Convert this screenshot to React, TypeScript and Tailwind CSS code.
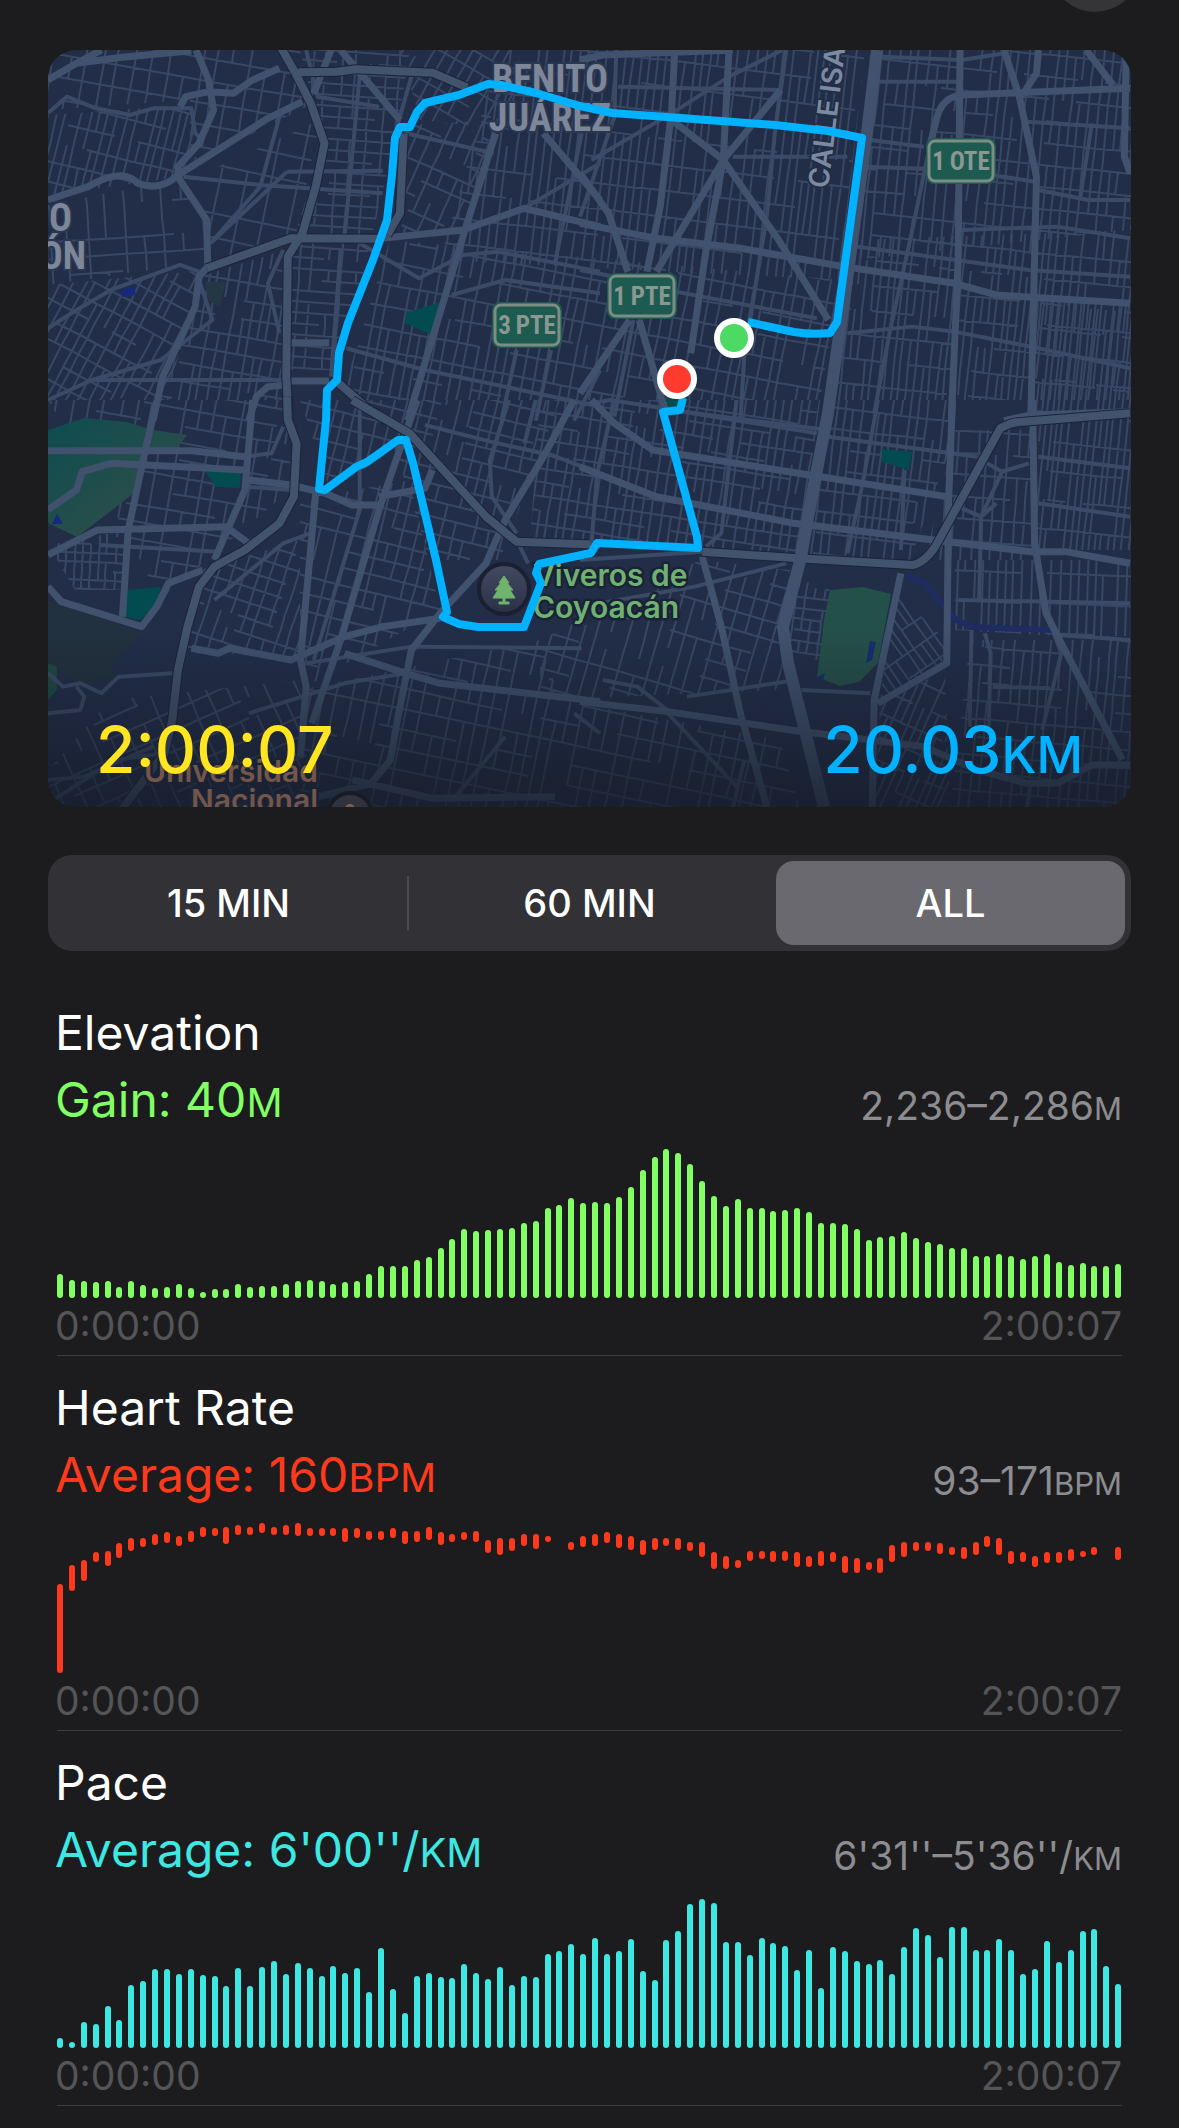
import { useState } from "react";

/* ---------- chart data ---------- */

const elevation = [
  24, 18, 17, 16, 17, 11, 17, 13, 10, 11, 14, 10, 6, 9, 9, 14, 11, 12, 12, 14, 17, 18, 17, 14, 16, 17, 24, 32, 32, 32,
  38, 41, 50, 59, 69, 67, 68, 69, 70, 75, 77, 90, 93, 100, 95, 96, 95, 101, 111, 128, 141, 149, 145, 134, 117, 102, 92,
  99, 90, 90, 87, 88, 90, 86, 75, 75, 74, 69, 58, 61, 62, 66, 60, 56, 54, 50, 50, 42, 42, 44, 42, 39, 42, 44, 36, 33,
  35, 32, 32, 34,
];

const pace = [
  10, 6, 26, 24, 42, 28, 63, 67, 79, 79, 74, 79, 73, 72, 62, 80, 62, 81, 87, 74, 85, 80, 72, 82, 75, 80, 56, 100, 59,
  35, 72, 75, 71, 70, 84, 75, 69, 81, 63, 72, 71, 94, 97, 104, 94, 110, 94, 97, 109, 77, 68, 108, 117, 144, 149, 145,
  106, 106, 93, 110, 105, 102, 78, 98, 60, 101, 97, 87, 84, 88, 74, 101, 120, 113, 91, 121, 121, 98, 98, 109, 98, 74,
  79, 107, 86, 98, 117, 119, 82, 64,
];

/* [offset from the top, length]; a zero length is a missing sample */
const heartRate: [number, number][] = [
  [61, 89], [42, 26], [37, 21], [29, 10], [28, 15], [20, 15], [15, 13], [15, 9], [11, 11], [9, 11],
  [13, 10], [8, 11], [4, 10], [5, 8], [4, 17], [2, 10], [4, 8], [0, 10], [4, 8], [2, 10],
  [0, 13], [5, 8], [5, 8], [5, 8], [5, 14], [5, 10], [8, 9], [8, 9], [5, 10], [8, 13],
  [8, 11], [4, 13], [9, 13], [11, 8], [9, 8], [8, 11], [17, 13], [15, 17], [15, 13], [11, 12],
  [11, 15], [13, 6], [0, 0], [19, 8], [13, 11], [11, 12], [9, 11], [11, 14], [13, 14], [17, 15],
  [15, 12], [15, 8], [15, 12], [19, 9], [19, 15], [29, 17], [33, 13], [37, 8], [28, 10], [28, 8],
  [28, 11], [28, 10], [29, 15], [33, 11], [28, 15], [29, 10], [33, 17], [35, 15], [39, 8], [35, 15],
  [22, 17], [19, 15], [19, 9], [19, 9], [20, 11], [24, 8], [24, 12], [19, 13], [13, 11], [15, 17],
  [28, 13], [29, 10], [33, 11], [29, 11], [29, 11], [26, 12], [28, 6], [24, 8], [0, 0], [24, 13],
];

const CHART_HEIGHT = 150;
const fromBase = (values: number[]): [number, number][] => values.map((v) => [CHART_HEIGHT - v, v]);

/* ---------- map streets ---------- */

type District = { poly: [number, number][]; angle: number; gap: number; block: number };

const districts: District[] = [
  { poly: [[48, 50], [300, 50], [310, 105], [190, 165], [190, 100], [48, 110]], angle: 10, gap: 15, block: 22 },
  { poly: [[48, 115], [190, 105], [205, 150], [175, 178], [48, 195]], angle: 14, gap: 8, block: 20 },
  { poly: [[48, 205], [175, 180], [205, 220], [205, 262], [48, 285]], angle: -4, gap: 18, block: 17 },
  { poly: [[48, 285], [205, 270], [165, 400], [48, 400]], angle: 28, gap: 9, block: 18 },
  { poly: [[205, 275], [285, 250], [285, 400], [160, 400]], angle: 10, gap: 9, block: 18 },
  { poly: [[200, 175], [320, 120], [295, 240], [205, 265]], angle: 12, gap: 22, block: 24 },
  { poly: [[300, 50], [410, 50], [395, 140], [340, 370], [290, 370], [290, 250], [324, 143]], angle: 4, gap: 14, block: 11 },
  { poly: [[405, 125], [500, 120], [465, 230], [392, 238]], angle: 24, gap: 13, block: 16 },
  { poly: [[400, 50], [520, 50], [510, 130], [420, 120]], angle: 30, gap: 12, block: 17 },
  { poly: [[500, 50], [865, 50], [840, 280], [440, 260]], angle: 7, gap: 8, block: 26 },
  { poly: [[390, 240], [840, 280], [820, 400], [340, 400]], angle: 11, gap: 10, block: 22 },
  { poly: [[870, 50], [1131, 50], [1131, 230], [855, 260]], angle: 6, gap: 9, block: 22 },
  { poly: [[855, 240], [1131, 230], [1131, 400], [830, 400]], angle: 6, gap: 7, block: 25 },
  { poly: [[1035, 300], [1131, 300], [1131, 550], [1035, 550]], angle: 6, gap: 6, block: 29 },
  { poly: [[300, 400], [560, 400], [500, 560], [430, 560], [395, 450], [330, 490]], angle: 14, gap: 11, block: 16 },
  { poly: [[540, 400], [820, 400], [800, 555], [530, 540]], angle: 9, gap: 9, block: 14 },
  { poly: [[825, 400], [955, 400], [950, 450], [910, 560], [805, 555]], angle: 7, gap: 8, block: 21 },
  { poly: [[955, 430], [1035, 430], [1040, 560], [925, 560]], angle: 4, gap: 9, block: 22 },
  { poly: [[300, 500], [410, 480], [440, 610], [300, 690]], angle: 14, gap: 13, block: 17 },
  { poly: [[48, 400], [290, 400], [290, 490], [160, 600], [125, 530]], angle: 10, gap: 15, block: 17 },
  { poly: [[48, 545], [128, 530], [122, 590], [75, 590]], angle: 3, gap: 8, block: 9 },
  { poly: [[200, 570], [300, 540], [300, 660], [180, 650]], angle: 18, gap: 12, block: 15 },
  { poly: [[540, 640], [700, 560], [790, 570], [780, 690], [540, 700]], angle: 16, gap: 14, block: 18 },
  { poly: [[790, 580], [830, 585], [820, 660], [785, 660]], angle: 8, gap: 9, block: 11 },
  { poly: [[895, 590], [945, 640], [945, 660], [880, 700]], angle: -35, gap: 7, block: 22 },
  { poly: [[880, 705], [945, 670], [950, 807], [875, 807]], angle: 24, gap: 7, block: 22 },
  { poly: [[955, 560], [1131, 560], [1131, 640], [955, 630]], angle: 2, gap: 8, block: 30 },
  { poly: [[970, 640], [1131, 640], [1131, 807], [950, 807]], angle: 5, gap: 9, block: 18 },
  { poly: [[300, 690], [540, 640], [560, 700], [780, 740], [800, 807], [300, 807]], angle: 12, gap: 13, block: 20 },
  { poly: [[48, 770], [110, 700], [300, 680], [310, 807], [48, 807]], angle: -24, gap: 16, block: 19 },
];

const streets = (d: District, seed: number) => {
  let s = seed * 7919 + 13;
  const rnd = () => {
    s = (s * 1103515245 + 12345) % 2147483648;
    return s / 2147483648;
  };
  const xs = d.poly.map((p) => p[0]);
  const ys = d.poly.map((p) => p[1]);
  const cx = (Math.min(...xs) + Math.max(...xs)) / 2;
  const cy = (Math.min(...ys) + Math.max(...ys)) / 2;
  const r = Math.hypot(Math.max(...xs) - cx, Math.max(...ys) - cy) + 20;
  const a = (d.angle * Math.PI) / 180;
  const at = (u: number, v: number) =>
    `${Math.round(cx + u * Math.cos(a) - v * Math.sin(a))} ${Math.round(cy + u * Math.sin(a) + v * Math.cos(a))}`;
  let path = "";
  for (let u = -r; u < r; u += d.gap * (0.8 + rnd() * 0.5)) {
    for (let v = -r; v < r; v += d.block) {
      if (rnd() > 0.16) path += `M${at(u, v)}L${at(u, v + d.block)}`;
    }
  }
  for (let v = -r; v < r; v += d.block) {
    for (let u = -r; u < r; u += d.gap * 3) {
      if (rnd() > 0.24) path += `M${at(u, v)}L${at(u + d.gap * 3, v)}`;
    }
  }
  return path;
};

/* Road geometry, one set per map tile. */
const tiles = [
  {
    transform: "scale(.3827 .3333)",
    freeway: "M733 140L770 215L812 310L848 430L825 560L790 700L752 770L748 1130L755 1265M780 217L880 215L930 208L1130 218L1220 262M540 805L650 760L760 715L990 716M885 1150L960 1225L1010 1262M1012 705L1045 640L1055 400",
    major: "M125 240L200 190L265 150M200 190L320 172L500 152M512 150L545 240L558 330L520 430L465 500L470 540L540 660L543 800L520 830L510 920L470 1020L425 1130L400 1262M125 600L230 560Q320 500 360 550Q420 575 465 525L700 355L790 305M470 320L485 290L545 275L610 280L660 240L730 205M990 716L1210 690L1370 625L1568 680M1295 400L1215 690L1065 1262M1420 400L1568 600M890 150L1045 360M865 150L820 280M760 1028L860 1028M760 1143L860 1143M650 1262L670 1190L700 1160L750 1155",
    minor: "M125 340L175 290L250 325L340 345L400 325L500 325L510 400L530 420M125 985L200 930L290 870L470 795L520 815M940 225L900 715M1075 230L1040 370M480 530L680 555L1000 580M750 515L1000 512M735 330L680 560L550 730M750 515L690 580L550 730M940 730L1095 835L1210 765L1300 755L1568 815M1520 400L1450 790M1568 490L1370 625M890 750L865 1130M905 1045L1110 1110L1568 1220M125 1200L240 1140L750 1140M1568 1110L1500 1262M1350 1050L1310 1262M1440 1050L1400 1262M740 750L700 850L730 1000M520 840L555 960L420 1080L240 1140M800 150L830 290L990 320M1060 400L1290 460M1180 885L1320 840L1568 880",
  },
  {
    transform: "translate(580) scale(.382 .3333)",
    freeway: "",
    major: "M0 180L60 165L400 150M248 150L240 330L210 620L175 815M390 150L375 480L330 750L290 1060M525 270L375 480L200 815M240 360L375 480L520 720L650 960M0 520L75 640L125 815M0 670L200 715L420 745L690 800L980 850L1090 885L1440 910M995 150L990 780L972 1262M1440 265L1000 285Q950 290 935 350L915 440M1110 150L1150 290L1195 530L1180 1262M1200 150L1195 220L1155 290M1325 150L1395 255M1430 150L1425 470L1440 520M130 960L0 1180M155 960L225 1240M1110 1262L1180 1245L1440 1235",
    minor: "M540 150L510 400L490 640L430 1070L420 1262M30 480L240 340L390 230L530 150M915 440L870 690L810 1000L770 1240M760 420L900 440M700 1000L870 980L980 995L1180 1040L1440 1105M725 740L1175 810L1440 830M250 875L620 955M140 960L90 1250M95 150L90 350L0 650M1200 570L1330 600L1440 600M1000 690L1250 680L1440 715M100 260L525 270M400 470L700 470M780 245L1000 245M790 170L1000 180L1110 160M1170 365L1440 385M0 810L110 835M0 1215L80 1200L300 1240L650 1290M1340 370L1310 590M750 500L990 510L1190 545",
  },
  {
    transform: "translate(0 400) scale(.3827 .3333)",
    freeway: "M750 -10L752 60L775 130L768 290L730 370L640 450L560 500L520 560L490 680L465 810L450 960L430 1060L320 1225M920 0L1070 100L1270 350L1350 425L1568 434",
    major: "M410 0L380 150L335 390L320 650M125 152L500 152L640 170M125 330L200 270L215 215L290 190L640 210M660 0L640 270L560 480M125 465L255 390L590 380L650 430M125 560L160 605L370 680L410 620L440 550L530 510M650 240L760 255L850 280L920 315L990 315M990 290L1110 265L1130 210M1090 0L1050 130L990 330L890 720L815 970M825 280L785 780L800 860L785 1070M500 745L570 760L600 745L760 780L900 710L1000 680L1150 655M900 760L1060 820L1150 850L1568 905M1300 410L1270 490L1150 640L1075 750L1040 950L1020 1080L970 1150L800 1200M1500 0L1420 170L1320 360L1300 410M920 1140L1130 1195L1450 1190",
    minor: "M260 435L570 455M1110 75L1300 130L1440 165L1568 220M1330 0L1280 180L1285 290L1350 400M1400 0L1370 130M125 820L165 860L210 850L265 880L310 830L450 820M125 940L210 930L220 890L200 860M1320 1010L1190 1190M800 790L1075 740L1520 745M810 400L740 430L560 600M940 20L940 330L820 780M125 1140L220 1130L400 1040M140 1200L300 1080L430 1060M640 170L710 160L740 80M1350 420L1380 490M640 260L760 270M650 940L900 850L1060 820M1500 940L1568 1000",
  },
  {
    transform: "translate(580 400) scale(.382 .3333)",
    freeway: "M320 455L570 475L870 495Q900 490 930 440L1100 85Q1130 65 1160 65L1440 40",
    major: "M975 0L965 300L960 790L780 910M840 520L770 900L765 1225M1185 0L1190 430L1220 640L1260 730L1420 1080M320 470L370 680L420 940L490 1225M0 905L230 935L550 990L900 1040L1040 1110L1170 1150L1250 1150L1340 1095L1440 1095M0 200L200 290L560 370L1180 455L1270 455L1440 490M30 0L90 70L190 150L600 225L960 290",
    minor: "M1240 700L1260 760L1210 990M270 35L620 100M650 110L1040 170M410 0L370 400L330 440M90 0L45 220L30 430M780 0L740 250L700 460M990 600L1440 610M1250 705L1440 720M1025 690L1020 980M1060 700L1075 760L1070 980M280 890L540 845M580 870L760 880M230 940L410 1160M850 210L840 450M1050 180L1105 215L1175 190M1105 215L1050 350L1045 600M990 320L1050 350L1090 310M0 620L300 560L540 490M0 480L320 455M1200 170L1440 205M1200 310L1440 350M1080 860L1230 865M240 940L150 860L60 840M430 1080L400 1225M1180 1150L1170 1225",
  },
];

const route =
  "M748 322L794 332Q812 335 830 333L837 322L862 138L828 131L775 125L721 121L612 113L580 106L536 93L501 85L488 84L459 95L425 103L417 112L410 127L400 127L395 138L392 175L387 220L373 260L348 323L339 353L337 380L327 390L326 420L319 489L325 490L356 467L367 462L398 440L406 440L413 463L436 560L447 612L443 617L459 624L478 627L524 627L541 583L536 573L539 564L591 553L597 543L698 548L697 537L663 412L680 410L683 398";

const narrow = "'Liberation Sans Narrow', 'Roboto Condensed', 'Open Sans Condensed', 'Liberation Sans', sans-serif";

function Shield({ x, y, children }: { x: number; y: number; children: string }) {
  return (
    <g>
      <rect x={x - 35} y={y - 23} width="70" height="46" rx="8" fill="#1d5a50" />
      <rect x={x - 32} y={y - 20} width="64" height="40" rx="6" fill="#1d5a50" stroke="#7b8d85" strokeWidth="3" />
      <text x={x} y={y + 9} textAnchor="middle" fontSize="25" fontWeight="700" fill="#8a9892" fontFamily={narrow}>
        {children}
      </text>
    </g>
  );
}

function RouteMap() {
  return (
    <svg viewBox="48 50 1083 757" className="block h-full w-full" role="img" aria-label="Workout route map">
      <defs>
        <linearGradient id="fade" x1="0" y1="0" x2="0" y2="1">
          <stop offset="0" stopColor="#141a26" stopOpacity="0" />
          <stop offset="1" stopColor="#141a26" stopOpacity=".7" />
        </linearGradient>
        <linearGradient id="poi" x1="0" y1="0" x2="0" y2="1">
          <stop offset="0" stopColor="#434a62" />
          <stop offset="1" stopColor="#2a3048" />
        </linearGradient>
        <linearGradient id="park" x1="0" y1="0" x2="1" y2="1">
          <stop offset="0" stopColor="#0d4c50" />
          <stop offset=".6" stopColor="#264e4b" />
          <stop offset="1" stopColor="#164a4e" />
        </linearGradient>
        {districts.map((d, i) => (
          <clipPath id={`district-${i}`} key={i}>
            <polygon points={d.poly.map((p) => p.join(",")).join(" ")} />
          </clipPath>
        ))}
      </defs>
      <rect x="48" y="50" width="1083" height="757" fill="#222d48" />

      {districts.map((d, i) => (
        <g key={i} clipPath={`url(#district-${i})`}>
          <path d={streets(d, i + 1)} fill="none" stroke="#384864" strokeWidth="2" />
        </g>
      ))}

      {/* parks and water */}
      <path d="M48 600L127 627L142 633L111 663L115 677L76 683L48 663Z" fill="#22313f" />
      <path d="M48 430L84 418L126 422L153 430L187 435L178 447L142 450L138 490L77 537L48 523Z" fill="url(#park)" />
      <path d="M48 663L57 667L57 690L48 700Z" fill="#1d4a45" />
      <path d="M205 471L241 473L240 488L216 487Z" fill="#024c4f" />
      <path d="M126 590L161 587L155 607L140 620L126 617Z" fill="#024c4f" />
      <path d="M440 302L406 313L405 323L429 334L433 333Z" fill="#024c4f" />
      <path d="M205 282L226 282L220 307L208 300Z" fill="#243744" />
      <path d="M882 449L912 452L909 470L882 462Z" fill="#024c4f" />
      <path d="M667 398h22l-6 10h-16z" fill="#024c4f" />
      <path d="M830 590L863 587L891 594L878 663L859 682L840 686L817 677L824 620Z" fill="#24504a" />
      <path d="M866 663L870 641L876 642L872 660ZM817 677l8-4l-2 8z" fill="#172e70" />
      <path d="M120 291L134 286L136 295L122 297ZM52 524L57 514L63 524Z" fill="#17297f" />
      <path d="M907 575L924 583L956 620L973 627L1054 630" fill="none" stroke="#1f2c62" strokeWidth="6" />

      {tiles.map((t) => (
        <g key={t.transform} transform={t.transform} fill="none" strokeLinejoin="round">
          <path d={t.minor} stroke="#3b4b67" strokeWidth="4" vectorEffect="non-scaling-stroke" />
          <path d={t.major} stroke="#40526e" strokeWidth="7" vectorEffect="non-scaling-stroke" />
          <path d={t.freeway} stroke="#1c2436" strokeWidth="10" vectorEffect="non-scaling-stroke" />
          <path d={t.freeway} stroke="#42536e" strokeWidth="8" vectorEffect="non-scaling-stroke" />
        </g>
      ))}
      <path
        d="M877 50L867 133L847 280L828 413L813 490L801 557L783 627L788 663L824 807"
        fill="none"
        stroke="#40526e"
        strokeWidth="12"
        strokeLinejoin="round"
      />
      <rect x="48" y="630" width="1083" height="177" fill="url(#fade)" />

      {/* place names */}
      <g fontFamily={narrow} fontWeight="700" fontSize="38" fill="#7c8799" stroke="#2b3650" strokeWidth="4" paintOrder="stroke">
        <text x="550" y="92" textAnchor="middle">BENITO</text>
        <text x="550" y="131" textAnchor="middle">JUÁREZ</text>
        <text x="72" y="231" textAnchor="end">O</text>
        <text x="86" y="269" textAnchor="end">ÓN</text>
      </g>
      <text
        transform="translate(828 189) rotate(-83)"
        fontFamily="Inter, sans-serif"
        fontWeight="600"
        fontSize="28"
        fill="#7c8aa0"
        stroke="#222d48"
        strokeWidth="4"
        paintOrder="stroke"
      >
        CALLE ISA
      </text>

      <Shield x={527} y={325}>{"3\u2009PTE"}</Shield>
      <Shield x={642} y={296}>{"1\u2009PTE"}</Shield>
      <Shield x={961} y={161}>{"1\u2009OTE"}</Shield>

      <g fontFamily="Inter, sans-serif" fontWeight="600" fontSize="30" stroke="#1a2335" strokeWidth="5" strokeLinejoin="round" paintOrder="stroke">
        <g fill="#70b072">
          <text x="533" y="586">Viveros de</text>
          <text x="533" y="618">Coyoacán</text>
        </g>
        <g fill="#74554a" textAnchor="end">
          <text x="318" y="782">Universidad</text>
          <text x="318" y="811">Nacional</text>
        </g>
      </g>
      <circle cx="504" cy="589" r="25" fill="url(#poi)" stroke="#1b2030" strokeWidth="4" />
      <path
        d="M504 576l5 7h-2l6 7h-3l5 8h-10v4h4v2h-10v-2h4v-4h-10l5-8h-3l6-7h-2z"
        fill="#6fb36c"
        stroke="#6fb36c"
        strokeWidth="1"
        strokeLinejoin="round"
      />
      <circle cx="350" cy="815" r="22" fill="#30323d" stroke="#171b26" strokeWidth="4" />
      <circle cx="350" cy="809" r="5" fill="#7d5f4d" />

      <path d={route} fill="none" stroke="#00b2ff" strokeWidth="8" strokeLinejoin="round" />

      <circle cx="734" cy="338" r="17" fill="#4cd964" stroke="#fff" strokeWidth="6" />
      <circle cx="677" cy="379" r="17" fill="#ff3b2f" stroke="#fff" strokeWidth="6" />
    </svg>
  );
}

type MetricProps = {
  title: string;
  summary: string;
  unit: string;
  range: string;
  rangeUnit: string;
  bars: [number, number][];
  textColor: string;
  barColor: string;
};

function Metric({ title, summary, unit, range, rangeUnit, bars, textColor, barColor }: MetricProps) {
  return (
    <section className="mx-[9px] border-b border-[#3c3c3e] pt-[18px] pb-[5px]">
      <h2 className="-ml-0.5 text-[48px] leading-[67px] text-white">{title}</h2>
      <div className="-ml-0.5 flex items-end justify-between">
        <p className={`text-[48px] leading-[67px] ${textColor}`}>
          {summary}
          <span className="text-[40px] leading-none">{unit}</span>
        </p>
        <p className="text-[39px] leading-[54px] text-[#8c8c91]">
          {range}
          <span className="text-[31px] leading-none">{rangeUnit}</span>
        </p>
      </div>
      <div className="mt-[15px] flex h-[150px] items-start justify-between" role="img" aria-label={`${title} chart`}>
        {bars.map(([top, length], i) => (
          <span
            key={i}
            className={`w-1.5 rounded-full ${barColor}`}
            style={{ marginTop: top, height: length }}
          />
        ))}
      </div>
      <div className="-ml-0.5 mt-1 flex justify-between text-[39px] leading-[48px] text-[#555558]">
        <span>0:00:00</span>
        <span>2:00:07</span>
      </div>
    </section>
  );
}

export default function App() {
  const [span, setSpan] = useState("ALL");
  const spans = ["15 MIN", "60 MIN", "ALL"];

  return (
    <main className="min-h-screen overflow-hidden bg-[#1c1c1e] px-12 pb-5 font-['Inter',sans-serif] text-white">
      <header className="-mr-[9px] flex h-3 items-end justify-end">
        <button type="button" aria-label="Close" className="size-[90px] shrink-0 rounded-full bg-[#353538]" />
      </header>

      <section className="relative mt-[38px] aspect-[1083/757] overflow-hidden rounded-[28px]">
        <RouteMap />
        <div className="absolute inset-x-0 bottom-0 flex items-baseline justify-between px-12 pb-[18px] text-[64px] leading-[78px] font-medium">
          <span className="text-[#ffe620]">2:00:07</span>
          <span className="text-[#00b2ff]">
            20.03<span className="text-[51px] leading-none">KM</span>
          </span>
        </div>
      </section>

      <div className="mt-12 grid h-24 grid-cols-3 rounded-3xl bg-[#323136]" role="group" aria-label="Time span">
        {spans.map((label, i) => (
          <div key={label} className="relative p-1.5">
            <button
              type="button"
              aria-pressed={span === label}
              onClick={() => setSpan(label)}
              className={`h-full w-full rounded-[18px] text-[38px] font-medium ${span === label ? "bg-[#6a696f]" : ""}`}
            >
              {label}
            </button>
            {i === 0 && <span className="absolute top-[21px] right-0 h-[54px] w-0.5 bg-[#4b4a50]" />}
          </div>
        ))}
      </div>

      <div className="mt-[30px]">
        <Metric
          title="Elevation"
          summary="Gain: 40"
          unit="M"
          range="2,236–2,286"
          rangeUnit="M"
          bars={fromBase(elevation)}
          textColor="text-[#82ff62]"
          barColor="bg-[#82ff62]"
        />
        <Metric
          title="Heart Rate"
          summary="Average: 160"
          unit="BPM"
          range="93–171"
          rangeUnit="BPM"
          bars={heartRate}
          textColor="text-[#ff3a1c]"
          barColor="bg-[#ff3a1c]"
        />
        <Metric
          title="Pace"
          summary="Average: 6'00''/"
          unit="KM"
          range="6'31''–5'36''/"
          rangeUnit="KM"
          bars={fromBase(pace)}
          textColor="text-[#3de8e2]"
          barColor="bg-[#3de8e2]"
        />
      </div>
    </main>
  );
}
